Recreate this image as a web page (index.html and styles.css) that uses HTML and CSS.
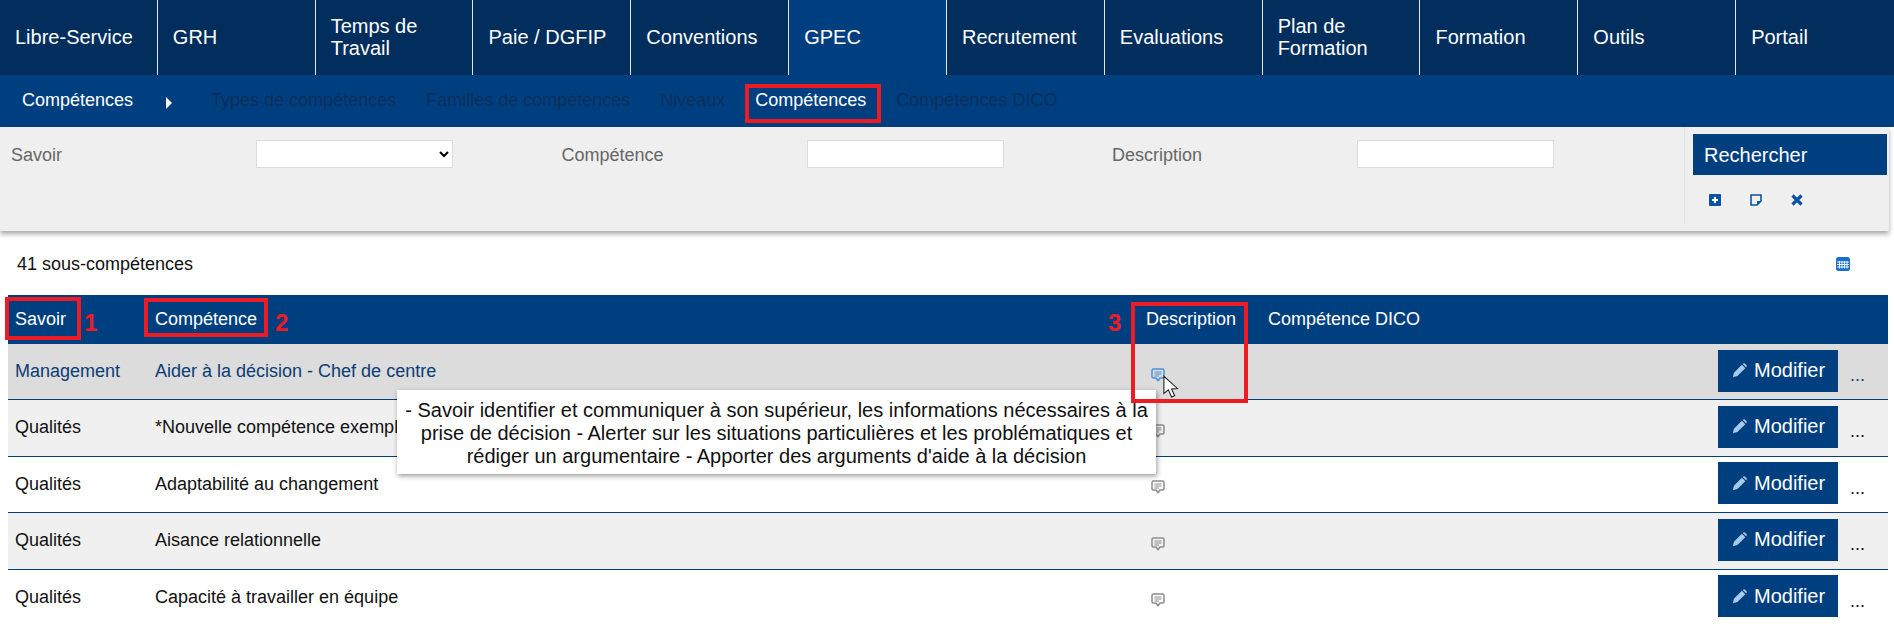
FILE: index.html
```html
<!DOCTYPE html>
<html lang="fr">
  <head>
    <meta charset="UTF-8" />
    <meta name="viewport" content="width=device-width, initial-scale=1.0" />
    <title>Compétences</title>
    <link rel="stylesheet" href="styles.css">
  </head>
  <body>
    <div class="page">
      <nav class="main-nav">
        <a class="nav-item">Libre-Service</a>
        <a class="nav-item">GRH</a>
        <a class="nav-item">Temps de Travail</a>
        <a class="nav-item">Paie / DGFIP</a>
        <a class="nav-item">Conventions</a>
        <a class="nav-item active">GPEC</a>
        <a class="nav-item">Recrutement</a>
        <a class="nav-item">Evaluations</a>
        <a class="nav-item">Plan de Formation</a>
        <a class="nav-item">Formation</a>
        <a class="nav-item">Outils</a>
        <a class="nav-item">Portail</a>
      </nav>

      <div class="sub-nav">
        <span class="sub-title">Compétences</span>
        <span class="sub-arrow"></span>
        <a class="sub-link">Types de compétences</a>
        <a class="sub-link">Familles de compétences</a>
        <a class="sub-link">Niveaux</a>
        <a class="sub-link current">Compétences</a>
        <a class="sub-link">Compétences DICO</a>
      </div>

      <div class="filters">
        <div class="filter-fields">
          <div class="filter-group">
            <label class="filter-label">Savoir</label>
            <select class="filter-input"><option></option></select>
          </div>
          <div class="filter-group">
            <label class="filter-label">Compétence</label>
            <input class="filter-input" type="text">
          </div>
          <div class="filter-group">
            <label class="filter-label">Description</label>
            <input class="filter-input" type="text">
          </div>
        </div>
        <div class="filter-actions">
          <button class="search-button">Rechercher</button>
          <div class="action-icons">
            <svg class="action-icon" viewBox="0 0 12 12"><path fill="#0c52a3" d="M1 0h10a1 1 0 0 1 1 1v10a1 1 0 0 1-1 1H1a1 1 0 0 1-1-1V1a1 1 0 0 1 1-1z"/><path fill="#fff" d="M5 3h2v2h2v2H7v2H5V7H3V5h2z"/></svg>
            <svg class="action-icon" viewBox="0 0 12 12"><path fill="none" stroke="#0c52a3" stroke-width="1.6" d="M1 1h10v6l-4 4H1z"/><path fill="#0c52a3" d="M7 7h4l-4 4z"/></svg>
            <svg class="action-icon" viewBox="0 0 12 12"><path stroke="#0c52a3" stroke-width="3.2" d="M1.500 1.500l9 9M10.500 1.500l-9 9"/></svg>
          </div>
        </div>
      </div>

      <div class="result-bar">
        <span>41 sous-compétences</span>
        <svg class="grid-icon" viewBox="0 0 14 14">
          <rect width="14" height="14" rx="2.500" fill="#1b6fc9"/>
          <path stroke="#fff" stroke-width="0.9" d="M1 5h12M1 7.500h12M1 10h12M3.500 4v7.500M6 4v7.500M8.500 4v7.500M11 4v7.500"/>
        </svg>
      </div>

      <div class="grid">
        <div class="grid-row grid-head">
          <div>Savoir</div>
          <div>Compétence</div>
          <div>Description</div>
          <div>Compétence DICO</div>
        </div>
        <div class="grid-row hover">
          <div>Management</div>
          <div>Aider à la décision - Chef de centre</div>
          <div><svg class="comment-icon blue" viewBox="0 0 14 14"><use href="#comment"/></svg></div>
          <div></div>
          <div class="row-actions"><button class="edit-button"><svg class="pencil" viewBox="0 0 14 14"><use href="#pencil"/></svg>Modifier</button><span class="more">...</span></div>
        </div>
        <div class="grid-row odd">
          <div>Qualités</div>
          <div>*Nouvelle compétence exemple</div>
          <div><svg class="comment-icon" viewBox="0 0 14 14"><use href="#comment"/></svg></div>
          <div></div>
          <div class="row-actions"><button class="edit-button"><svg class="pencil" viewBox="0 0 14 14"><use href="#pencil"/></svg>Modifier</button><span class="more">...</span></div>
        </div>
        <div class="grid-row">
          <div>Qualités</div>
          <div>Adaptabilité au changement</div>
          <div><svg class="comment-icon" viewBox="0 0 14 14"><use href="#comment"/></svg></div>
          <div></div>
          <div class="row-actions"><button class="edit-button"><svg class="pencil" viewBox="0 0 14 14"><use href="#pencil"/></svg>Modifier</button><span class="more">...</span></div>
        </div>
        <div class="grid-row odd">
          <div>Qualités</div>
          <div>Aisance relationnelle</div>
          <div><svg class="comment-icon" viewBox="0 0 14 14"><use href="#comment"/></svg></div>
          <div></div>
          <div class="row-actions"><button class="edit-button"><svg class="pencil" viewBox="0 0 14 14"><use href="#pencil"/></svg>Modifier</button><span class="more">...</span></div>
        </div>
        <div class="grid-row">
          <div>Qualités</div>
          <div>Capacité à travailler en équipe</div>
          <div><svg class="comment-icon" viewBox="0 0 14 14"><use href="#comment"/></svg></div>
          <div></div>
          <div class="row-actions"><button class="edit-button"><svg class="pencil" viewBox="0 0 14 14"><use href="#pencil"/></svg>Modifier</button><span class="more">...</span></div>
        </div>
      </div>

      <div class="tooltip">- Savoir identifier et communiquer à son supérieur, les informations nécessaires à la prise de décision - Alerter sur les situations particulières et les problématiques et rédiger un argumentaire - Apporter des arguments d'aide à la décision</div>

      <!-- annotations du tuto -->
      <div class="mark mark-menu"></div>
      <div class="mark mark-savoir"></div>
      <div class="mark mark-competence"></div>
      <div class="mark mark-description"></div>
      <span class="mark-num num-1">1</span>
      <span class="mark-num num-2">2</span>
      <span class="mark-num num-3">3</span>

      <svg class="cursor" viewBox="0 0 20 28">
        <path fill="#fff" stroke="#222" stroke-width="1.2" d="M1 1l0 19 5-4 3.500 8 3.500-1.500-3.500-7.500 6.500-.5z"/>
      </svg>
    </div>

    <svg class="defs" width="0" height="0">
      <symbol id="comment" viewBox="0 0 14 14">
        <path fill="none" stroke="currentColor" stroke-width="1.5" stroke-linejoin="round" d="M2.500 1h9A1.500 1.500 0 0 1 13 2.500v6A1.500 1.500 0 0 1 11.500 10H9l-2 2.800L5 10H2.500A1.500 1.500 0 0 1 1 8.500v-6A1.500 1.500 0 0 1 2.500 1z"/>
        <path stroke="currentColor" stroke-width="1.2" d="M3.500 4h7M3.500 6h7M3.500 8h4.500"/>
      </symbol>
      <symbol id="pencil" viewBox="0 0 14 14">
        <path fill="#a9cbea" d="M.8 13.200l1-4.200L9.200 1.600l3.200 3.200L5 12.200z"/>
        <path fill="#a9cbea" d="M10 .9l.6-.5a1 1 0 0 1 1.300 0l1.700 1.700a1 1 0 0 1 0 1.300l-.5.600z"/>
      </symbol>
    </svg>
  </body>
</html>
```

FILE: styles.css
```css
* {
  margin: 0;
  padding: 0;
  box-sizing: border-box;
}

html,
body {
  height: 624px;
  overflow: hidden;
  background-color: #fff;
}

body {
  font-family: "Liberation Sans", Arial, sans-serif;
  font-size: 18px;
  color: #111;
}

.page {
  position: relative;
  height: 624px;
  overflow: hidden;
}

.defs {
  position: absolute;
}

/* menu principal */
.main-nav {
  display: grid;
  grid-template-columns: repeat(12, 1fr);
  height: 75px;
  background-color: #012e5c;
}

.nav-item {
  display: flex;
  align-items: center;
  padding: 0 15px 2px;
  border-right: 1px solid #dfe6ee;
  color: #fff;
  font-size: 20px;
  line-height: 22px;
}

.nav-item:last-child {
  border-right: none;
}

.nav-item.active {
  background-color: #003f7f;
}

/* sous menu */
.sub-nav {
  display: flex;
  align-items: center;
  height: 52px;
  padding: 0 0 2px 22px;
  background-color: #003f7f;
  font-size: 18px;
}

.sub-title {
  color: #fff;
}

.sub-arrow {
  width: 0;
  height: 0;
  margin: 6px 39px 0 33px;
  border-top: 6px solid transparent;
  border-bottom: 6px solid transparent;
  border-left: 6px solid #fff;
}

.sub-link {
  margin-right: 30px;
  color: #0b2f5c;
}

.sub-link.current {
  color: #fff;
}

/* filtres */
.filters {
  display: flex;
  height: 104px;
  width: 1889px;
  background-color: #efefef;
  box-shadow: 0 3px 5px rgba(0, 0, 0, 0.35);
}

.filter-fields {
  display: grid;
  grid-template-columns: repeat(3, 550.5px);
  width: 1684px;
  padding: 13px 0 0 10px;
}

.filter-group {
  display: grid;
  grid-template-columns: 246px 197px;
  align-items: start;
}

.filter-label {
  padding-left: 1px;
  color: #666;
  font-size: 18px;
  line-height: 30px;
}

.filter-input {
  height: 28px;
  border: 1px solid #dcdcdc;
  background-color: #fff;
  font-size: 16px;
}

.filter-actions {
  width: 204px;
  height: 97px;
  padding: 7px 0 0 8px;
  border-left: 1px solid #e2e2e2;
}

.search-button {
  display: block;
  width: 194px;
  height: 41px;
  padding: 2px 0 0 11px;
  border: none;
  background-color: #003f7f;
  color: #fff;
  font-family: inherit;
  font-size: 20px;
  text-align: left;
}

.action-icons {
  display: flex;
  gap: 29px;
  padding: 19px 0 0 16px;
}

.action-icon {
  width: 12px;
  height: 12px;
}

/* ligne de resultat */
.result-bar {
  display: flex;
  justify-content: space-between;
  align-items: center;
  width: 1850px;
  height: 64px;
  padding: 2px 0 0 17px;
}

.grid-icon {
  width: 14px;
  height: 14px;
}

/* tableau */
.grid {
  margin-left: 8px;
  margin-right: 6px;
}

.grid-row {
  display: grid;
  grid-template-columns: 140px 991px 122px 445px 182px;
  align-items: center;
  height: 56.5px;
  padding-left: 7px;
  border-bottom: 1px solid #003f7f;
}

.grid-head {
  height: 49px;
  border-bottom: none;
  background-color: #003f7f;
  color: #fff;
}

.grid-row.hover {
  height: 56px;
  background-color: #dcdcdc;
  color: #0b3d75;
}

.grid-row.odd {
  background-color: #f0f0f0;
}

.comment-icon {
  display: block;
  width: 14px;
  height: 14px;
  margin: 6px 0 0 5px;
  color: #8c8c8c;
}

.comment-icon.blue {
  color: #4a8fd6;
}

.row-actions {
  display: flex;
  align-items: center;
  padding-left: 5px;
}

.edit-button {
  display: flex;
  align-items: center;
  gap: 7px;
  width: 120px;
  height: 42px;
  margin-bottom: 2px;
  padding-left: 14px;
  border: none;
  background-color: #003f7f;
  color: #fff;
  font-family: inherit;
  font-size: 20px;
}

.pencil {
  width: 15px;
  height: 15px;
}

.more {
  margin: 8px 0 0 12px;
}

/* bulle de description */
.tooltip {
  position: absolute;
  left: 397px;
  top: 390px;
  width: 759px;
  height: 84px;
  padding: 9px 5px;
  background-color: #fff;
  box-shadow: 1px 2px 5px rgba(0, 0, 0, 0.4);
  color: #111;
  font-size: 20px;
  line-height: 23px;
  text-align: center;
}

/* cadres rouges */
.mark {
  position: absolute;
  border: 4px solid #ed1c24;
}

.mark-menu {
  left: 745px;
  top: 84px;
  width: 136px;
  height: 39px;
}

.mark-savoir {
  left: 5px;
  top: 297px;
  width: 76px;
  height: 43px;
}

.mark-competence {
  left: 144px;
  top: 298px;
  width: 124px;
  height: 39px;
}

.mark-description {
  left: 1131px;
  top: 302px;
  width: 117px;
  height: 101px;
}

.mark-num {
  position: absolute;
  top: 309px;
  color: #ed1c24;
  font-size: 24px;
  font-weight: bold;
}

.num-1 {
  left: 84px;
}

.num-2 {
  left: 275px;
}

.num-3 {
  left: 1108px;
}

.cursor {
  position: absolute;
  left: 1163px;
  top: 375px;
  width: 18px;
  height: 26px;
}
```
